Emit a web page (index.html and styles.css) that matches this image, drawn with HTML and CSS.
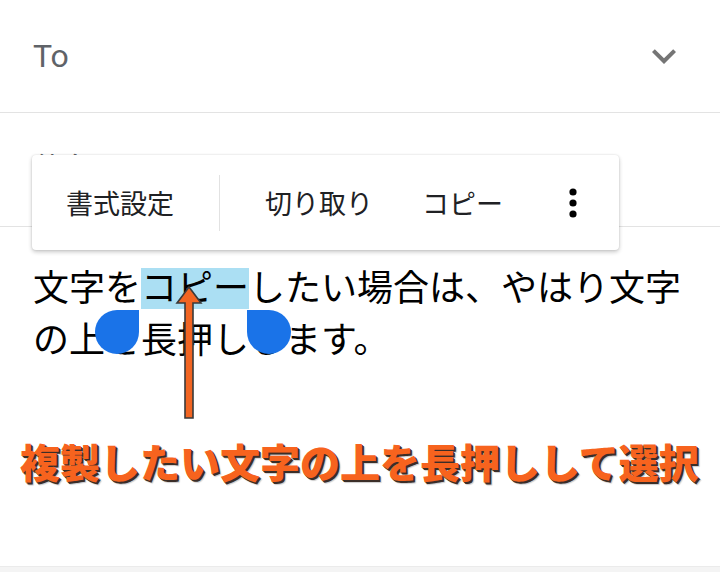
FILE: index.html
```html
<!DOCTYPE html>
<html lang="ja">
<head>
<meta charset="utf-8">
<title>コピー</title>
<link rel="stylesheet" href="styles.css">
</head>
<body>
<div class="screen">
  <div class="field field-to">
    <span class="label label-to">To</span>
    <svg class="chev" viewBox="0 0 24 24" aria-hidden="true"><path d="M16.59 8.59L12 13.17 7.41 8.59 6 10l6 6 6-6z"/></svg>
  </div>
  <div class="field field-subject">
    <span class="label label-subject">件名</span>
  </div>
  <div class="body">
    <p class="text">文字を<span class="sel">コピー</span>したい場合は、やはり文字の上を長押しします。</p>
  </div>
  <p class="caption">複製したい文字の上を長押しして選択</p>
  <div class="navstrip"></div>

  <div class="popup">
    <span class="pop-item pop-format">書式設定</span>
    <span class="pop-divider"></span>
    <span class="pop-item pop-cut">切り取り</span>
    <span class="pop-item pop-copy">コピー</span>
    <svg class="pop-more" viewBox="0 0 44 44" aria-hidden="true">
      <circle cx="22" cy="11" r="3.6"/>
      <circle cx="22" cy="22" r="3.6"/>
      <circle cx="22" cy="33" r="3.6"/>
    </svg>
  </div>

  <span class="handle handle-left"></span>
  <span class="handle handle-right"></span>

  <svg class="arrow" viewBox="0 0 40 140" aria-hidden="true">
    <polygon points="20,3 32,19 24,19 24,134 16,134 16,19 8,19"/>
  </svg>
</div>
</body>
</html>
```

FILE: styles.css
```css
* { box-sizing: border-box; }

html, body {
  margin: 0;
  padding: 0;
  background: #ffffff;
}

.screen {
  position: relative;
  width: 720px;
  min-height: 572px;
  display: flex;
  flex-direction: column;
  overflow: hidden;
  font-family: "Noto Sans CJK JP", "Noto Sans", sans-serif;
}

.field {
  display: flex;
  align-items: center;
  padding: 0 32px 0 33px;
  border-bottom: 1px solid #e3e3e3;
}

.field-to {
  height: 113px;
  justify-content: space-between;
}

.field-subject {
  height: 114px;
  padding-bottom: 7px;
}

.label {
  color: #5f6368;
}

.label-to {
  font-family: Roboto, "Noto Sans", sans-serif;
  font-size: 32px;
}

.label-subject {
  font-size: 30px;
}

.chev {
  width: 48px;
  height: 48px;
  fill: #757575;
}

.body {
  padding: 32px 37px 0 33px;
}

.text {
  margin: 0;
  font-size: 36px;
  line-height: 52px;
  color: #000000;
}

.sel {
  background: linear-gradient(to bottom, transparent 9px, #abdff3 9px, #abdff3 50px, transparent 50px);
}

.caption {
  margin: 78px 0 0 0;
  padding-left: 20px;
  font-size: 40px;
  line-height: 40px;
  font-weight: 900;
  color: #f7631e;
  letter-spacing: 0;
  white-space: nowrap;
  text-shadow: 1px 1px 0 #3b2e28, 2px 2px 0 #3b2e28, 3px 3px 1px rgba(0,0,0,0.2);
}

.navstrip {
  margin-top: auto;
  height: 6px;
  background: #f4f4f4;
  border-top: 1px solid #ebebeb;
}

/* floating text-selection toolbar */
.popup {
  position: absolute;
  left: 32px;
  top: 155px;
  width: 587px;
  height: 95px;
  display: flex;
  align-items: center;
  padding-left: 34px;
  background: #ffffff;
  border-radius: 4px;
  box-shadow: 0 2px 4px rgba(0,0,0,0.22), 0 0 2px rgba(0,0,0,0.12);
}

.pop-item {
  font-size: 27px;
  color: #202124;
  white-space: nowrap;
}

.pop-format { margin-right: 45px; }
.pop-divider {
  width: 1px;
  height: 56px;
  background: #e2e2e2;
  margin-right: 45px;
}
.pop-cut { margin-right: 49px; }
.pop-copy { margin-right: 48px; }

.pop-more {
  width: 44px;
  height: 44px;
  fill: #000000;
}

/* selection handles */
.handle {
  position: absolute;
  top: 310px;
  width: 44px;
  height: 44px;
  background: #1a73e8;
}

.handle-left {
  left: 95px;
  border-radius: 50% 0 50% 50%;
}

.handle-right {
  left: 247px;
  border-radius: 0 50% 50% 50%;
}

/* annotation arrow */
.arrow {
  position: absolute;
  left: 169px;
  top: 284px;
  width: 40px;
  height: 140px;
}

.arrow polygon {
  fill: #f26522;
  stroke: #3a3a3a;
  stroke-width: 1.6;
  stroke-linejoin: miter;
}
```
